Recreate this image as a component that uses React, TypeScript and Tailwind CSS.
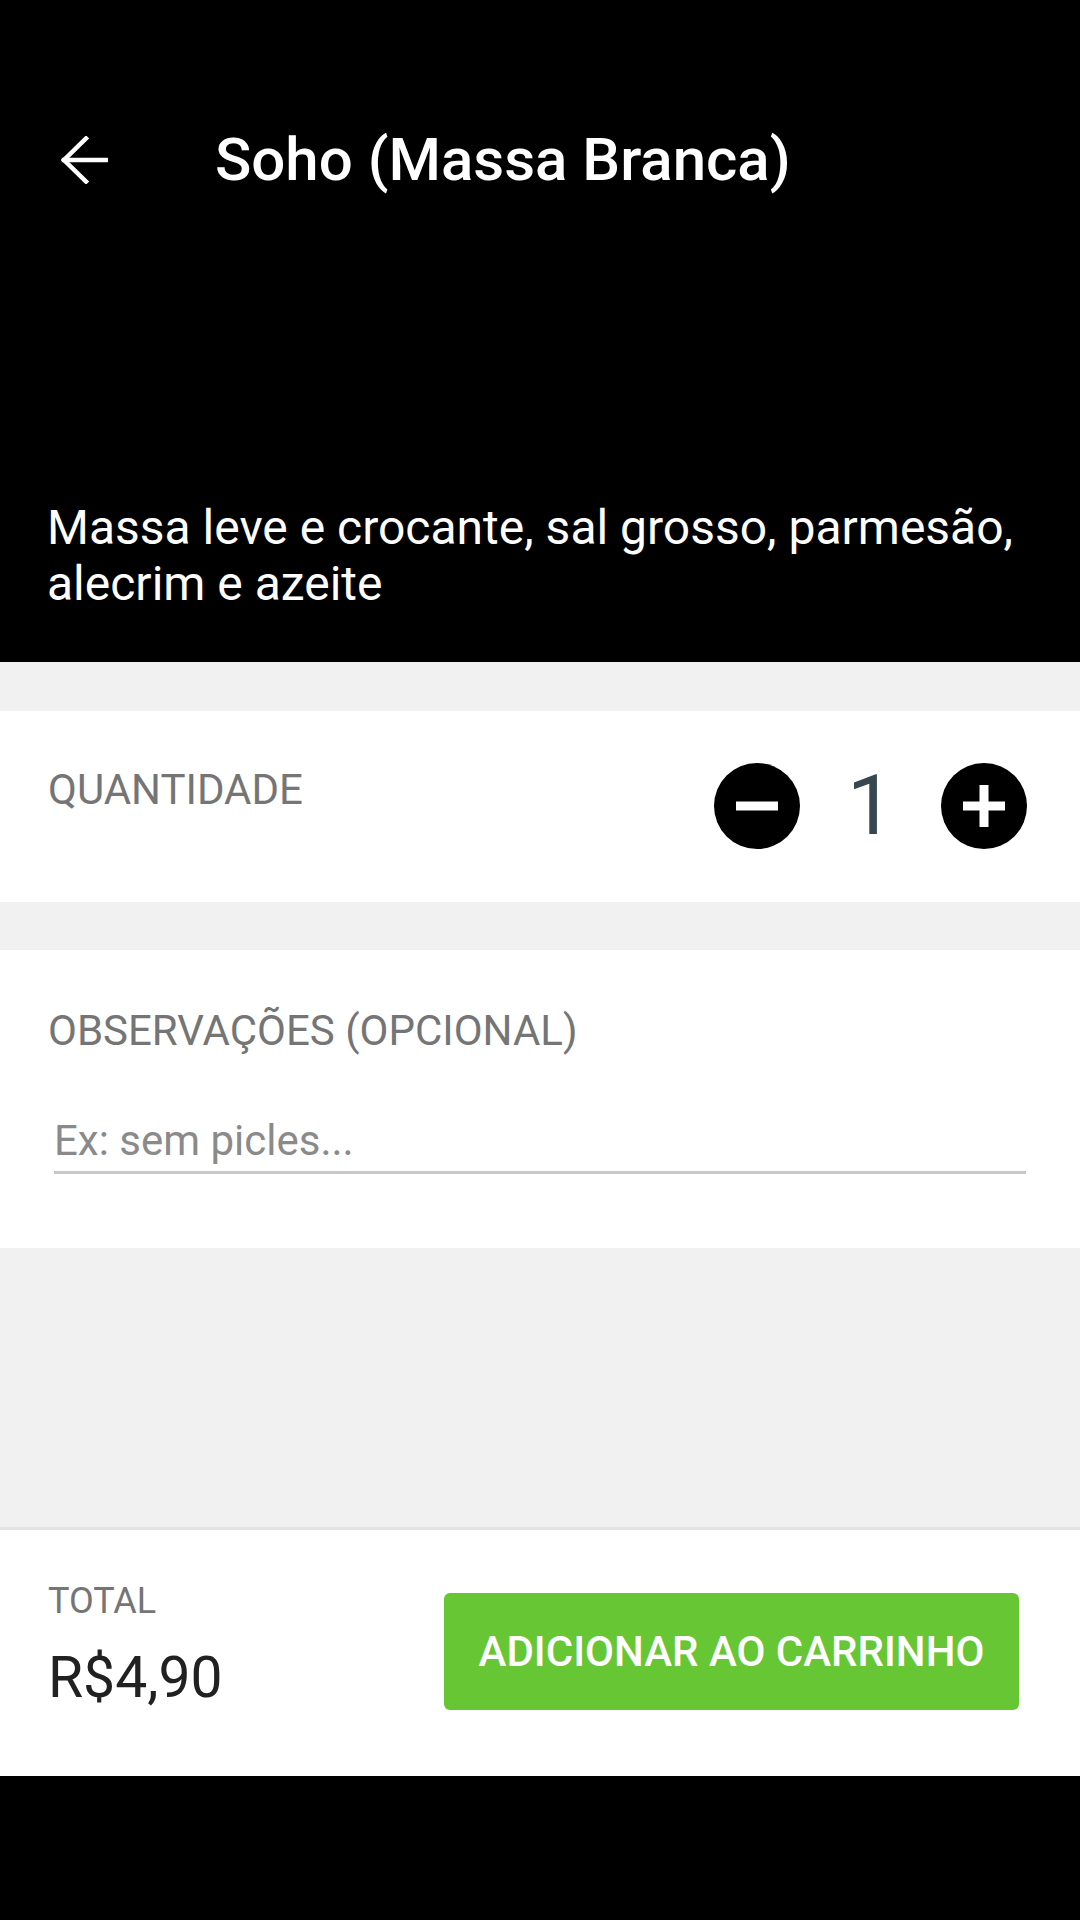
import React from "react";

function BackArrow() {
  return (
    <svg width="48" height="48" viewBox="0 0 48 48" fill="none" className="block">
      <path d="M46 24H4" stroke="white" strokeWidth="4.5" strokeLinecap="square" />
      <path d="M26 2.5L4 24L26 45.5" stroke="white" strokeWidth="4.5" strokeLinecap="square" strokeLinejoin="miter" />
    </svg>
  );
}

function MinusIcon() {
  return (
    <svg width="86" height="86" viewBox="0 0 86 86" className="block">
      <circle cx="43" cy="43" r="43" fill="black" />
      <rect x="22" y="38.5" width="42" height="9" fill="white" />
    </svg>
  );
}

function PlusIcon() {
  return (
    <svg width="86" height="86" viewBox="0 0 86 86" className="block">
      <circle cx="43" cy="43" r="43" fill="black" />
      <rect x="22" y="38.5" width="42" height="9" fill="white" />
      <rect x="38.5" y="22" width="9" height="42" fill="white" />
    </svg>
  );
}

export default function App() {
  return (
    <div className="w-[1080px] h-[1920px] flex flex-col bg-[#f1f1f1] [font-family:Roboto,'Liberation_Sans',sans-serif] overflow-hidden">
      {/* Header */}
      <div className="h-[662px] bg-black flex flex-col">
        <div className="mt-[76px] h-[168px] flex items-center">
          <div className="ml-[60px] w-[48px] h-[48px]">
            <BackArrow />
          </div>
          <div className="ml-[107px] text-white text-[60px] leading-[70px] font-medium">
            Soho (Massa Branca)
          </div>
        </div>
        <div className="flex-1" />
        <div className="px-[47px] pb-[50px] text-white text-[48px] leading-[56px]">
          Massa leve e crocante, sal grosso, parmesão,
          <br />
          alecrim e azeite
        </div>
      </div>

      {/* gap */}
      <div className="h-[49px]" />

      {/* Quantidade */}
      <div className="h-[191px] bg-white flex items-start justify-between pl-[48px] pr-[53px] pt-[52px]">
        <div className="mt-[3px] text-[42px] leading-[48px] text-[#757575]">QUANTIDADE</div>
        <div className="flex items-center">
          <MinusIcon />
          <div className="w-[141px] h-[86px] flex items-center justify-center text-[84px] leading-[86px] font-normal text-[#37474f]">
            1
          </div>
          <PlusIcon />
        </div>
      </div>

      {/* gap */}
      <div className="h-[48px]" />

      {/* Observações */}
      <div className="h-[298px] bg-white flex flex-col pt-[57px]">
        <div className="pl-[48px] text-[42px] leading-[48px] text-[#757575]">OBSERVAÇÕES (OPCIONAL)</div>
        <div className="mt-[55px] mx-[54px]">
          <input
            type="text"
            placeholder="Ex: sem picles..."
            className="w-full h-[64px] px-0 bg-transparent border-b-[3px] border-[#c8c8c8] text-[42px] leading-[62px] text-[#212121] placeholder:text-[#8a8a8a] outline-none"
          />
        </div>
      </div>

      {/* filler */}
      <div className="h-[279px]" />

      {/* Bottom bar */}
      <div className="h-[249px] bg-white border-t-[3px] border-[#e3e3e3] flex items-start justify-between pl-[48px] pr-[61px]">
        <div className="mt-[51px] flex flex-col">
          <div className="text-[36px] leading-[40px] text-[#757575]">TOTAL</div>
          <div className="mt-[25px] text-[57px] leading-[64px] text-[#212121]">R$4,90</div>
        </div>
        <button className="mt-[63px] w-[575px] h-[117px] rounded-[6px] bg-[#66c634] text-white text-[42px] font-medium flex items-center justify-center">
          ADICIONAR AO CARRINHO
        </button>
      </div>

      {/* Nav area */}
      <div className="h-[144px] bg-black" />
    </div>
  );
}
